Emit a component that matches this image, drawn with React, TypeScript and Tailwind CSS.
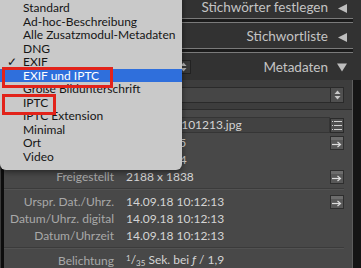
import React from 'react';

const menuItems = [
  'Standard',
  'Ad-hoc-Beschreibung',
  'Alle Zusatzmodul-Metadaten',
  'DNG',
  'EXIF',
  'EXIF und IPTC',
  'Große Bildunterschrift',
  'IPTC',
  'IPTC Extension',
  'Minimal',
  'Ort',
  'Video',
];

function UpDown({ color = '#c8c8c8' }: { color?: string }) {
  return (
    <svg width="7" height="10" viewBox="0 0 7 10">
      <path d="M3.5 0.5 L6.5 4 L0.5 4 Z" fill={color} />
      <path d="M0.5 6 L6.5 6 L3.5 9.5 Z" fill={color} />
    </svg>
  );
}

function ArrowButton() {
  return (
    <div className="w-[14px] h-[14px] border border-[#2e2e2e] bg-[#585858] flex flex-col">
      <div className="h-[3px] bg-[#6c6c6c]" />
      <div className="flex-1 flex items-center justify-center">
        <svg width="10" height="7" viewBox="0 0 10 7">
          <path d="M0 3.5 H8" stroke="#dcdcdc" strokeWidth="1.2" />
          <path d="M5.5 1 L8.5 3.5 L5.5 6" stroke="#dcdcdc" strokeWidth="1.2" fill="none" />
        </svg>
      </div>
    </div>
  );
}

function ListButton() {
  return (
    <div className="w-[14px] h-[15px] border border-[#2a2a2a] bg-[#4e4e4e] flex items-center justify-center">
      <svg width="10" height="9" viewBox="0 0 10 9">
        <g fill="#d0d0d0">
          <rect x="0" y="0" width="1" height="1" />
          <rect x="2" y="0" width="8" height="1" />
          <rect x="0" y="4" width="1" height="1" />
          <rect x="2" y="4" width="8" height="1" />
          <rect x="0" y="8" width="1" height="1" />
          <rect x="2" y="8" width="8" height="1" />
        </g>
      </svg>
    </div>
  );
}

function Row({ label, value, button }: { label: string; value: React.ReactNode; button?: 'arrow' | 'list' }) {
  return (
    <div className="flex items-center h-[17px] leading-[17px]">
      <div className="w-[110px] shrink-0 text-right text-[#a9a9a9] whitespace-nowrap">{label}</div>
      <div className="flex-1 pl-[12px] text-[#d4d4d4] whitespace-nowrap overflow-hidden">{value}</div>
      <div className="w-[14px] shrink-0 flex items-center">
        {button === 'arrow' && <ArrowButton />}
        {button === 'list' && <ListButton />}
      </div>
    </div>
  );
}

function Separator() {
  return <div className="h-[5px] mr-[8px] border-y border-[#7a7a7a] bg-[#1b1b1b]" />;
}

function Header({ title, open }: { title: string; open?: boolean }) {
  return (
    <div className="flex items-center justify-end gap-[9px] pr-[14px] text-[#c4c4c4] text-[13.5px] leading-none">
      <span>{title}</span>
      <svg width="10" height="9" viewBox="0 0 10 9">
        {open ? (
          <path d="M0 0.5 H10 L5 8.5 Z" fill="#bdbdbd" />
        ) : (
          <path d="M10 0 V9 L1 4.5 Z" fill="#bdbdbd" />
        )}
      </svg>
    </div>
  );
}

export default function App() {
  return (
    <div
      className="relative w-[361px] h-[268px] overflow-hidden bg-[#111111]"
      style={{ fontFamily: 'Lato, "Liberation Sans", sans-serif' }}
    >
      <div className="flex flex-col h-full">
        {/* collapsed panels */}
        <div className="bg-[#323232] pl-[4px]">
          <div className="h-[18px] pb-[2px] flex items-center justify-end">
            <Header title="Stichwörter festlegen" />
          </div>
          <Separator />
          <div className="h-[25px] pt-[3px] flex items-center justify-end">
            <Header title="Stichwortliste" />
          </div>
          <Separator />
          <div className="h-[27px] pt-[2px] flex items-center justify-end relative">
            <div className="absolute left-[172px] top-[7px] w-[15px] h-[14px] border border-[#222222] bg-[#3a3a3a] flex items-center justify-center">
              <UpDown color="#b8b8b8" />
            </div>
            <Header title="Metadaten" open />
          </div>
        </div>

        <div className="flex flex-1">
          <div className="w-[1px] bg-[#3a3a3a]" />
          <div className="w-[3px] bg-[#0d0d0d]" />
          <div className="flex-1 flex flex-col bg-[#484848] border-r border-[#5e5e5e]">
            {/* preset select */}
            <div className="h-[30px] bg-[#3d3d3d] border-b border-[#2c2c2c] pt-[7px] pr-[8px] flex justify-end">
              <div className="w-full ml-[6px] h-[16px] border border-[#2a2a2a] bg-[#464646] flex justify-end">
                <div className="w-[13px] h-[14px] border-l border-[#2a2a2a] bg-[#505050] flex items-center justify-center">
                  <UpDown />
                </div>
              </div>
            </div>

            {/* metadata rows */}
            <div className="flex-1 pr-[8px] pt-[7px] text-[12px]">
              <div className="flex items-center h-[16px] mb-[1px] leading-[14px]">
                <div className="w-[110px] shrink-0 text-right text-[#a9a9a9]">Dateiname</div>
                <div className="flex-1 ml-[2px] h-[16px] border border-[#353535] bg-[#424242] pl-[3px] text-[#d4d4d4] whitespace-nowrap overflow-hidden">20180914_101213.jpg</div>
                <ListButton />
              </div>
              <Row label="Ordner" value="Fotos 2015" button="arrow" />
              <Row label="Abmessungen" value={<span className="tracking-[-0.7px]">2448 x 3264</span>} />
              <Row label="Freigestellt" value="2188 x 1838" button="arrow" />
              <div className="my-[3px] h-[2px] border-t border-[#3b3b3b] border-b border-b-[#525252]" />
              <Row label="Urspr. Dat./Uhrz." value="14.09.18 10:12:13" button="arrow" />
              <Row label="Datum/Uhrz. digital" value="14.09.18 10:12:13" />
              <Row label="Datum/Uhrzeit" value="14.09.18 10:12:13" />
              <div className="my-[3px] h-[2px] border-t border-[#3b3b3b] border-b border-b-[#525252]" />
              <Row
                label="Belichtung"
                value={
                  <span>
                    <span className="relative -top-[3px] text-[8px]">1</span>/
                    <span className="relative top-[2px] text-[8px]">35</span> Sek. bei <i>ƒ</i> / 1,9
                  </span>
                }
              />
            </div>
          </div>
          <div className="w-[8px] bg-[#151515]" />
        </div>
      </div>

      {/* popup menu */}
      <div className="absolute left-0 top-[-5px] w-[182px] bg-[#c9c9c9] rounded-b-[6px] pt-[6px] pb-[7px] text-[12px] text-[#151515] shadow-[0_2px_6px_rgba(0,0,0,0.5)]">
        {menuItems.map((item, i) => (
          <div
            key={item}
            className={
              'relative h-[13.5px] leading-[13.5px] pl-[23px] whitespace-nowrap ' +
              (i === 5 ? 'bg-[#2f6fdc] text-white' : '')
            }
          >
            {i === 4 && <span className="absolute left-[7px] top-0">✓</span>}
            {item}
          </div>
        ))}
      </div>

      {/* annotation boxes */}
      <div className="absolute left-[2px] top-[67px] w-[111px] h-[21px] border-[3px] border-[#e2231a]" />
      <div className="absolute left-[2px] top-[94px] w-[54px] h-[21px] border-[3px] border-[#e2231a]" />
    </div>
  );
}
